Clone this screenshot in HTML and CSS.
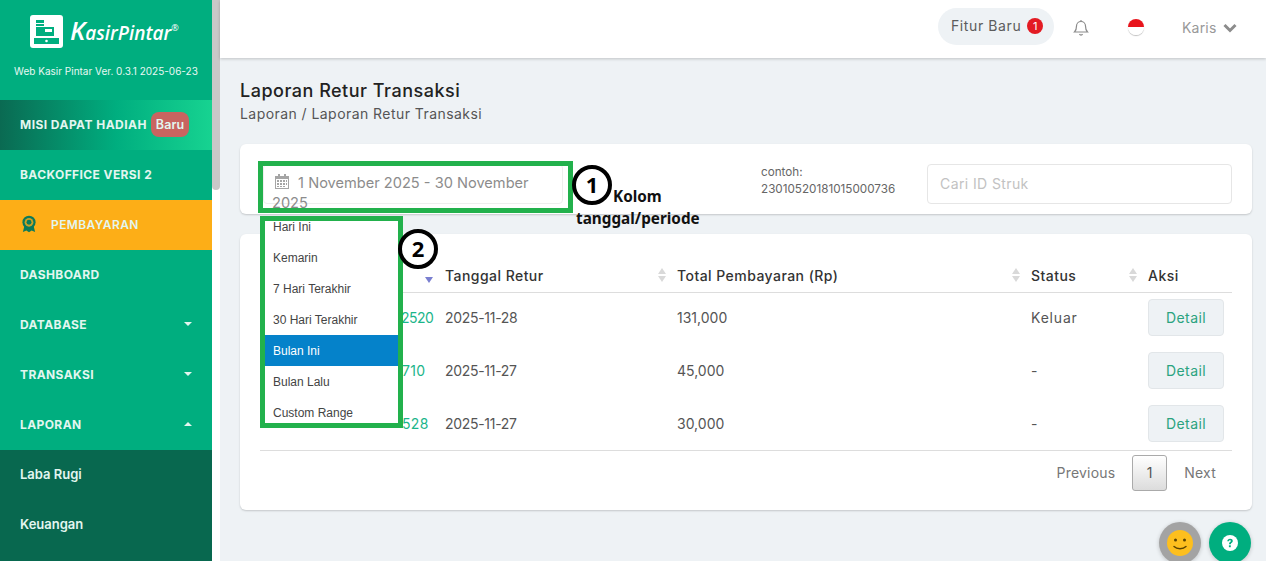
FILE: index.html
```html
<!DOCTYPE html>
<html lang="en">
<head>
    <meta charset="UTF-8">
    <meta name="viewport" content="width=device-width, initial-scale=1.0">
    <title>Laporan Retur Transaksi</title>
    <link rel="stylesheet" href="styles.css">
</head>
<body>
    <aside class="sidebar">
        <div class="brand">
            <div class="brand-logo">
                <div class="logo-box">
                    <svg width="25" height="25" viewBox="0 0 25 25">
                        <path d="M2 1h8v3H2z M2 5h8v2H2z" fill="#00ae7f"/>
                        <path d="M2 8h18v9H2z" fill="#00ae7f"/>
                        <path d="M11 10h7v3h-7z" fill="#fff"/>
                        <path d="M0 19h25v6H0z" fill="#00ae7f"/>
                        <circle cx="12.5" cy="22" r="1.3" fill="#fff"/>
                    </svg>
                </div>
                <span class="brand-name"><b>K</b>asirPintar<sup>®</sup></span>
            </div>
            <div class="brand-version">Web Kasir Pintar Ver. 0.3.1 2025-06-23</div>
        </div>
        <nav>
            <a class="nav-item nav-mission">MISI DAPAT HADIAH <span class="nav-badge">Baru</span></a>
            <a class="nav-item">BACKOFFICE VERSI 2</a>
            <a class="nav-item nav-pay">
                <svg width="14" height="18" viewBox="0 0 16 20">
                    <path d="M3 11l-2 8 4-1.500 3 2 3-2 4 1.500-2-8z" fill="#0c7a5a"/>
                    <circle cx="8" cy="8" r="7.500" fill="#0c7a5a"/>
                    <circle cx="8" cy="8" r="5" fill="#c9a227"/>
                    <circle cx="8" cy="8" r="2.800" fill="#0c7a5a"/>
                </svg>
                PEMBAYARAN
            </a>
            <a class="nav-item">DASHBOARD</a>
            <a class="nav-item nav-down">DATABASE</a>
            <a class="nav-item nav-down">TRANSAKSI</a>
            <a class="nav-item nav-up">LAPORAN</a>
            <a class="nav-item nav-sub">Laba Rugi</a>
            <a class="nav-item nav-sub">Keuangan</a>
            <div class="nav-item nav-sub"></div>
        </nav>
    </aside>
    <div class="side-scroll"><div class="side-thumb"></div></div>

    <main class="main">
        <header class="topbar">
            <div class="pill">Fitur Baru <span class="pill-count">1</span></div>
            <svg class="bell" width="16" height="17" viewBox="0 0 16 17" fill="none" stroke="#8a8a8a" stroke-width="1.200">
                <path d="M1.500 13c1.500-1.500 2-3 2-6a4.500 4.500 0 0 1 9 0c0 3 .5 4.500 2 6z"/>
                <path d="M6.500 15a1.600 1.600 0 0 0 3 0"/>
                <path d="M8 1v1"/>
            </svg>
            <div class="flag"></div>
            <div class="user">Karis
                <svg width="14" height="10" viewBox="0 0 14 10" fill="none" stroke="#8c8c8c" stroke-width="3">
                    <path d="M1.500 2l5.500 5.500 5.500-5.500"/>
                </svg>
            </div>
        </header>

        <section class="content">
            <h1 class="page-title">Laporan Retur Transaksi</h1>
            <div class="crumbs">Laporan / Laporan Retur Transaksi</div>

            <div class="card filter-card">
                <div class="date-input">
                    <svg width="14" height="15" viewBox="0 0 14 15" fill="#a5a5a5">
                        <path d="M3 0h2v2h4V0h2v2h3v13H0V2h3z M1 5v9h12V5z"/>
                        <path d="M2 6h2v2H2z M5 6h2v2H5z M8 6h2v2H8z M11 6h1v2h-1z M2 9h2v2H2z M5 9h2v2H5z M8 9h2v2H8z M11 9h1v2h-1z M2 12h2v1H2z M5 12h2v1H5z M8 12h2v1H8z"/>
                    </svg>
                    <span class="date-text">1 November 2025 - 30 November 2025</span>
                </div>
                <div class="hint">contoh:<br>23010520181015000736</div>
                <input class="search" type="text" placeholder="Cari ID Struk">
            </div>

            <div class="card table-card">
                <table class="grid">
                    <thead>
                        <tr>
                            <th class="col-id sort-active"></th>
                            <th class="col-date sortable">Tanggal Retur</th>
                            <th class="col-total sortable">Total Pembayaran (Rp)</th>
                            <th class="col-status sortable">Status</th>
                            <th class="col-act">Aksi</th>
                        </tr>
                    </thead>
                    <tbody>
                        <tr>
                            <td class="id-cell id-long">2520</td>
                            <td class="date-cell">2025-11-28</td>
                            <td>131,000</td>
                            <td class="status-cell">Keluar</td>
                            <td><button class="detail">Detail</button></td>
                        </tr>
                        <tr>
                            <td class="id-cell">710</td>
                            <td class="date-cell">2025-11-27</td>
                            <td>45,000</td>
                            <td class="status-cell">-</td>
                            <td><button class="detail">Detail</button></td>
                        </tr>
                        <tr>
                            <td class="id-cell">528</td>
                            <td class="date-cell">2025-11-27</td>
                            <td>30,000</td>
                            <td class="status-cell">-</td>
                            <td><button class="detail">Detail</button></td>
                        </tr>
                    </tbody>
                </table>
                <div class="pager">
                    <span>Previous</span>
                    <span class="page-current">1</span>
                    <span>Next</span>
                </div>
            </div>
        </section>
    </main>

    <!-- overlays -->
    <div class="mark mark-date"></div>
    <div class="range-menu">
        <ul>
            <li>Hari Ini</li>
            <li>Kemarin</li>
            <li>7 Hari Terakhir</li>
            <li>30 Hari Terakhir</li>
            <li class="active">Bulan Ini</li>
            <li>Bulan Lalu</li>
            <li>Custom Range</li>
        </ul>
    </div>
    <div class="step step-one">1</div>
    <div class="step step-two">2</div>
    <div class="note">
        <span class="note-first">Kolom</span><br>tanggal/periode
    </div>

    <div class="float float-mood">
        <svg width="26" height="26" viewBox="0 0 26 26">
            <circle cx="13" cy="13" r="13" fill="#fdbf1e"/>
            <circle cx="8.500" cy="10" r="1.500" fill="#5a4300"/>
            <circle cx="17.500" cy="10" r="1.500" fill="#5a4300"/>
            <path d="M7 16.500c3 3 9 3 12 0" fill="none" stroke="#5a4300" stroke-width="1.400" stroke-linecap="round"/>
        </svg>
    </div>
    <div class="float float-help">
        <svg width="16" height="16" viewBox="0 0 16 16">
            <circle cx="8" cy="8" r="8" fill="#fff"/>
            <path d="M5.300 6.200c0-1.600 1.200-2.500 2.800-2.500s2.700.9 2.700 2.300c0 1.900-2 1.800-2 3.200H7c0-2.200 2-2.100 2-3.100 0-.5-.4-.8-1-.8-.7 0-1 .4-1.100 1z" fill="#00ae7f"/>
            <rect x="6.900" y="10.300" width="1.900" height="1.900" fill="#00ae7f"/>
        </svg>
    </div>
</body>
</html>
```

FILE: styles.css
```css
* {
    box-sizing: border-box;
}

html, body {
    height: 100%;
}

body {
    margin: 0;
    display: flex;
    height: 561px;
    overflow: hidden;
    font-family: Inter, "Open Sans", sans-serif;
    background: #eef2f5;
    color: #555;
}

/* sidebar */
.sidebar {
    width: 212px;
    flex: none;
    background: #00ae7f;
    overflow: hidden;
}

.side-scroll {
    width: 8px;
    flex: none;
    background: #fff;
}

.side-thumb {
    height: 190px;
    background: #c8c8c8;
    border-radius: 0 0 4px 4px;
}

.brand {
    height: 100px;
    padding-top: 15px;
}

.brand-logo {
    display: flex;
    align-items: center;
    height: 33px;
    padding-left: 30px;
    gap: 7px;
}

.logo-box {
    width: 33px;
    height: 33px;
    background: #fff;
    border-radius: 3px;
    display: flex;
    align-items: center;
    justify-content: center;
}

.brand-name {
    font-family: "Open Sans", sans-serif;
    font-style: italic;
    font-size: 19px;
    line-height: 33px;
    font-weight: 600;
    color: #fff;
    white-space: nowrap;
}

.brand-name b {
    font-size: 26px;
    font-weight: 600;
}

.brand-name sup {
    font-size: 9px;
    font-style: normal;
    font-weight: 400;
    vertical-align: 9px;
    line-height: 0;
}

.brand-version {
    margin-top: 17px;
    text-align: center;
    font-size: 10px;
    color: #e8f8f3;
    white-space: nowrap;
}

.nav-item {
    display: flex;
    align-items: center;
    height: 50px;
    padding-left: 20px;
    padding-bottom: 2px;
    font-size: 12px;
    letter-spacing: 0.4px;
    font-weight: 700;
    color: #e3f6f0;
    position: relative;
    white-space: nowrap;
}

.nav-mission {
    background: linear-gradient(90deg, #0a6a52, #00ae7f 55%, #17d391);
    letter-spacing: 0.45px;
}

.nav-badge {
    background: #c96460;
    border-radius: 8px;
    margin-left: 4px;
    padding: 0 5px;
    height: 25px;
    line-height: 25px;
    font-size: 12.500px;
    font-weight: 600;
    letter-spacing: 0.1px;
}

.nav-pay {
    background: #fdae17;
    padding-left: 22px;
    gap: 15px;
    font-weight: 600;
}

.nav-down::after,
.nav-up::after {
    content: "";
    position: absolute;
    left: 184px;
    border-left: 4px solid transparent;
    border-right: 4px solid transparent;
}

.nav-down::after {
    top: 22px;
    border-top: 4px solid #e3f6f0;
}

.nav-up::after {
    top: 22px;
    border-bottom: 4px solid #e3f6f0;
}

.nav-sub {
    background: #08684f;
    font-size: 13px;
    font-weight: 600;
    letter-spacing: 0;
}

/* main area */
.main {
    flex: 1;
    min-width: 0;
}

.topbar {
    height: 58px;
    background: #fff;
    box-shadow: 0 1px 3px rgba(0, 0, 0, 0.2);
    display: flex;
    align-items: flex-start;
    padding: 8px 0 0 718px;
    position: relative;
}

.pill {
    width: 116px;
    height: 37px;
    flex: none;
    background: #eef2f5;
    border-radius: 19px;
    padding: 0 0 2px 13px;
    display: flex;
    align-items: center;
    gap: 6px;
    font-size: 14px;
    letter-spacing: 0.6px;
    color: #5c5c5c;
    white-space: nowrap;
}

.pill-count {
    width: 16px;
    height: 16px;
    border-radius: 50%;
    background: #e31b23;
    color: #fff;
    font-size: 11px;
    letter-spacing: 0;
    text-align: center;
    line-height: 16px;
}

.bell {
    flex: none;
    margin: 11px 0 0 19px;
}

.flag {
    flex: none;
    width: 16px;
    height: 16px;
    margin: 11px 0 0 39px;
    border-radius: 50%;
    background: linear-gradient(#e8141c 50%, #fff 50%);
    box-shadow: 0 1px 1px rgba(0, 0, 0, 0.25);
}

.user {
    flex: none;
    margin: 11px 0 0 38px;
    font-size: 14px;
    letter-spacing: 0.2px;
    color: #999;
    display: flex;
    align-items: center;
    gap: 6px;
}

.content {
    padding: 22px 14px 0 20px;
}

.page-title {
    margin: 0;
    font-size: 18px;
    line-height: 22px;
    font-weight: 500;
    letter-spacing: 0.5px;
    color: #222;
}

.crumbs {
    margin-top: 2px;
    font-size: 14px;
    line-height: 20px;
    letter-spacing: 0.44px;
    color: #555;
}

.card {
    background: #fff;
    border-radius: 6px;
    box-shadow: 0 1px 2px rgba(0, 0, 0, 0.18);
}

.filter-card {
    height: 70px;
    margin-top: 20px;
    display: flex;
    align-items: flex-start;
    padding: 20px 20px 0 23px;
}

.date-input {
    width: 300px;
    height: 40px;
    flex: none;
    padding: 8px 8px;
    font-size: 14.600px;
    line-height: 20px;
    color: #8c8c8c;
    border: 1px solid #eee;
    border-radius: 4px;
}

.date-input svg {
    margin: 0 5px 0 3px;
    vertical-align: -1px;
}

.hint {
    width: 166px;
    margin-left: 198px;
    flex: none;
    font-size: 11.700px;
    line-height: 17px;
    color: #666;
    white-space: nowrap;
}

.search {
    width: 305px;
    height: 40px;
    flex: none;
    border: 1px solid #e6e6e6;
    border-radius: 4px;
    padding: 0 12px 2px;
    font: 14px Inter, sans-serif;
    letter-spacing: 0.4px;
    color: #555;
}

.search::placeholder {
    color: #c2c2c2;
}

.table-card {
    height: 276px;
    margin-top: 20px;
    padding: 26px 20px 0;
}

.grid {
    width: 972px;
    table-layout: fixed;
    border-collapse: collapse;
    font-size: 14px;
}

.grid th {
    height: 32px;
    padding: 0 0 0 4px;
    text-align: left;
    font-weight: 500;
    letter-spacing: 0.45px;
    color: #333;
    border-bottom: 1px solid #ddd;
    position: relative;
}

.col-id { width: 181px; }
.col-date { width: 232px; }
.col-total { width: 354px; }
.col-status { width: 117px; }
.col-act { width: 88px; }

.sortable::before,
.sortable::after,
.sort-active::after {
    content: "";
    position: absolute;
    right: 7px;
    border-left: 4px solid transparent;
    border-right: 4px solid transparent;
}

.sortable::before {
    top: 8px;
    border-bottom: 6px solid #d9d9d9;
}

.sortable::after {
    top: 16px;
    border-top: 6px solid #d9d9d9;
}

.sort-active::after {
    top: 17px;
    right: 8px;
    border-top: 6px solid #7a7fd0;
}

.grid td {
    height: 53px;
    padding: 0 0 2px 4px;
    color: #555;
}

.grid tbody tr:last-child td {
    height: 52px;
    padding-bottom: 0;
    border-bottom: 1px solid #ddd;
}

.grid .id-cell {
    color: #1bb58a;
    padding-left: 142px;
    letter-spacing: 0.3px;
    white-space: nowrap;
}

.grid .id-long {
    padding-left: 141px;
    letter-spacing: -0.5px;
}

.grid .date-cell {
    letter-spacing: -0.3px;
}

.grid .status-cell {
    letter-spacing: 0.8px;
}

.detail {
    width: 76px;
    height: 37px;
    background: #eef2f5;
    border: 1px solid #e2e6e9;
    border-radius: 4px;
    color: #2aa37f;
    font: 14px Inter, sans-serif;
    letter-spacing: 0.4px;
}

.pager {
    display: flex;
    justify-content: flex-end;
    align-items: center;
    gap: 17px;
    margin-top: 4px;
    padding-right: 16px;
    font-size: 14px;
    letter-spacing: 0.2px;
    color: #777;
}

.page-current {
    width: 35px;
    height: 36px;
    line-height: 34px;
    text-align: center;
    border: 1px solid #aaa;
    border-radius: 3px;
    background: linear-gradient(#fff, #dcdcdc);
    color: #555;
}

/* overlays on the shot */
.mark {
    position: absolute;
    left: 258px;
    top: 161px;
    width: 315px;
    height: 52px;
    border: 5px solid #22b14c;
}

.range-menu {
    position: absolute;
    left: 260px;
    top: 216px;
    width: 143px;
    height: 212px;
    border: 5px solid #22b14c;
    background: #fff;
    overflow: hidden;
}

.range-menu ul {
    list-style: none;
    margin: -10px 0 0;
    padding: 0;
}

.range-menu li {
    height: 31px;
    line-height: 33px;
    padding-left: 8px;
    font-family: "Liberation Sans", Arial, sans-serif;
    font-size: 12px;
    color: #444;
}

.range-menu li.active {
    background: #0582ca;
    color: #fff;
}

.step {
    position: absolute;
    width: 40px;
    height: 40px;
    border: 4px solid #000;
    border-radius: 50%;
    background: #fff;
    color: #000;
    font-family: "Noto Sans", sans-serif;
    font-size: 22px;
    font-weight: 700;
    line-height: 31px;
    text-align: center;
}

.step-one {
    left: 572px;
    top: 165px;
}

.step-two {
    left: 398px;
    top: 229px;
}

.note {
    position: absolute;
    left: 576px;
    top: 185px;
    font-family: "Noto Sans", sans-serif;
    font-size: 15.300px;
    line-height: 22px;
    font-weight: 700;
    color: #111;
}

.note-first {
    margin-left: 37px;
}

.float {
    position: fixed;
    top: 522px;
    width: 42px;
    height: 42px;
    border-radius: 50%;
    display: flex;
    align-items: center;
    justify-content: center;
    box-shadow: 0 1px 4px rgba(0, 0, 0, 0.2);
}

.float-mood {
    left: 1159px;
    background: #a3a3a3;
}

.float-help {
    left: 1209px;
    background: #00ae7f;
}
```
